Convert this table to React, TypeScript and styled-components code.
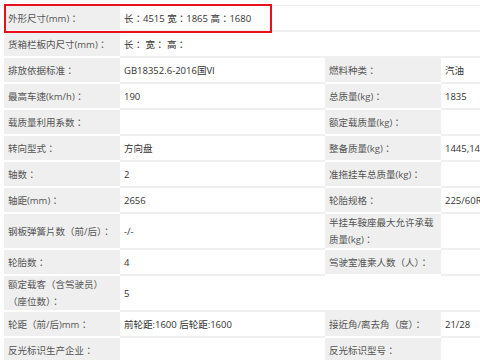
import React from "react";
import styled, { createGlobalStyle } from "styled-components";

const GlobalStyle = createGlobalStyle`
  html, body {
    margin: 0;
    padding: 0;
    background: #fff;
    overflow: hidden;
  }
`;

const Wrapper = styled.div`
  position: relative;
  width: 476px;
  overflow: hidden;
  padding: 5px 0 0 4px;
  font-family: "Open Sans", "Noto Sans CJK TC", "Noto Sans CJK SC", sans-serif;
  font-size: 9.5px;
`;

const SpecTable = styled.table`
  border-collapse: collapse;
  table-layout: fixed;
  width: 642px;
  border-top: 1px solid #ececec;
`;

const Label = styled.td`
  height: 24px;
  padding: 0 4px;
  line-height: 17px;
  vertical-align: middle;
  background: #efefef;
  color: #555;
  border-bottom: 2px solid #fff;
  word-break: break-all;
`;

const Value = styled.td`
  height: 24px;
  padding: 0 4px;
  line-height: 17px;
  vertical-align: middle;
  background: #fff;
  color: #333;
  border-bottom: 2px solid #f0f0f0;
  white-space: nowrap;
  overflow: hidden;
`;

const Highlight = styled.div`
  position: absolute;
  left: 4px;
  top: 4px;
  width: 264px;
  height: 25px;
  border: 2px solid #e8101a;
  pointer-events: none;
`;

type Row = {
  label: string;
  value: string;
  label2?: string;
  value2?: string;
};

const rows: Row[] = [
  { label: "外形尺寸(mm)：", value: "长：4515 宽：1865 高：1680" },
  { label: "货箱栏板内尺寸(mm)：", value: "长： 宽： 高：" },
  { label: "排放依据标准：", value: "GB18352.6-2016国VI", label2: "燃料种类：", value2: "汽油" },
  { label: "最高车速(km/h)：", value: "190", label2: "总质量(kg)：", value2: "1835" },
  { label: "载质量利用系数：", value: "", label2: "额定载质量(kg)：", value2: "" },
  { label: "转向型式：", value: "方向盘", label2: "整备质量(kg)：", value2: "1445,1470" },
  { label: "轴数：", value: "2", label2: "准拖挂车总质量(kg)：", value2: "" },
  { label: "轴距(mm)：", value: "2656", label2: "轮胎规格：", value2: "225/60R18" },
  { label: "钢板弹簧片数（前/后）：", value: "-/-", label2: "半挂车鞍座最大允许承载质量(kg)：", value2: "" },
  { label: "轮胎数：", value: "4", label2: "驾驶室准乘人数（人）：", value2: "" },
  { label: "额定载客（含驾驶员）（座位数）：", value: "5" },
  { label: "轮距（前/后)mm：", value: "前轮距:1600 后轮距:1600", label2: "接近角/离去角（度）：", value2: "21/28" },
  { label: "反光标识生产企业：", value: "", label2: "反光标识型号：", value2: "" },
];

export default function App() {
  return (
    <Wrapper>
      <GlobalStyle />
      <SpecTable>
        <colgroup>
          <col style={{ width: 116 }} />
          <col style={{ width: 205 }} />
          <col style={{ width: 116 }} />
          <col style={{ width: 205 }} />
        </colgroup>
        <tbody>
          {rows.map((row, i) => (
            <tr key={i.toString()}>
              <Label>{row.label}</Label>
              {row.label2 !== undefined ? (
                <>
                  <Value>{row.value}</Value>
                  <Label>{row.label2}</Label>
                  <Value>{row.value2}</Value>
                </>
              ) : (
                <Value colSpan={3}>{row.value}</Value>
              )}
            </tr>
          ))}
        </tbody>
      </SpecTable>
      <Highlight />
    </Wrapper>
  );
}
